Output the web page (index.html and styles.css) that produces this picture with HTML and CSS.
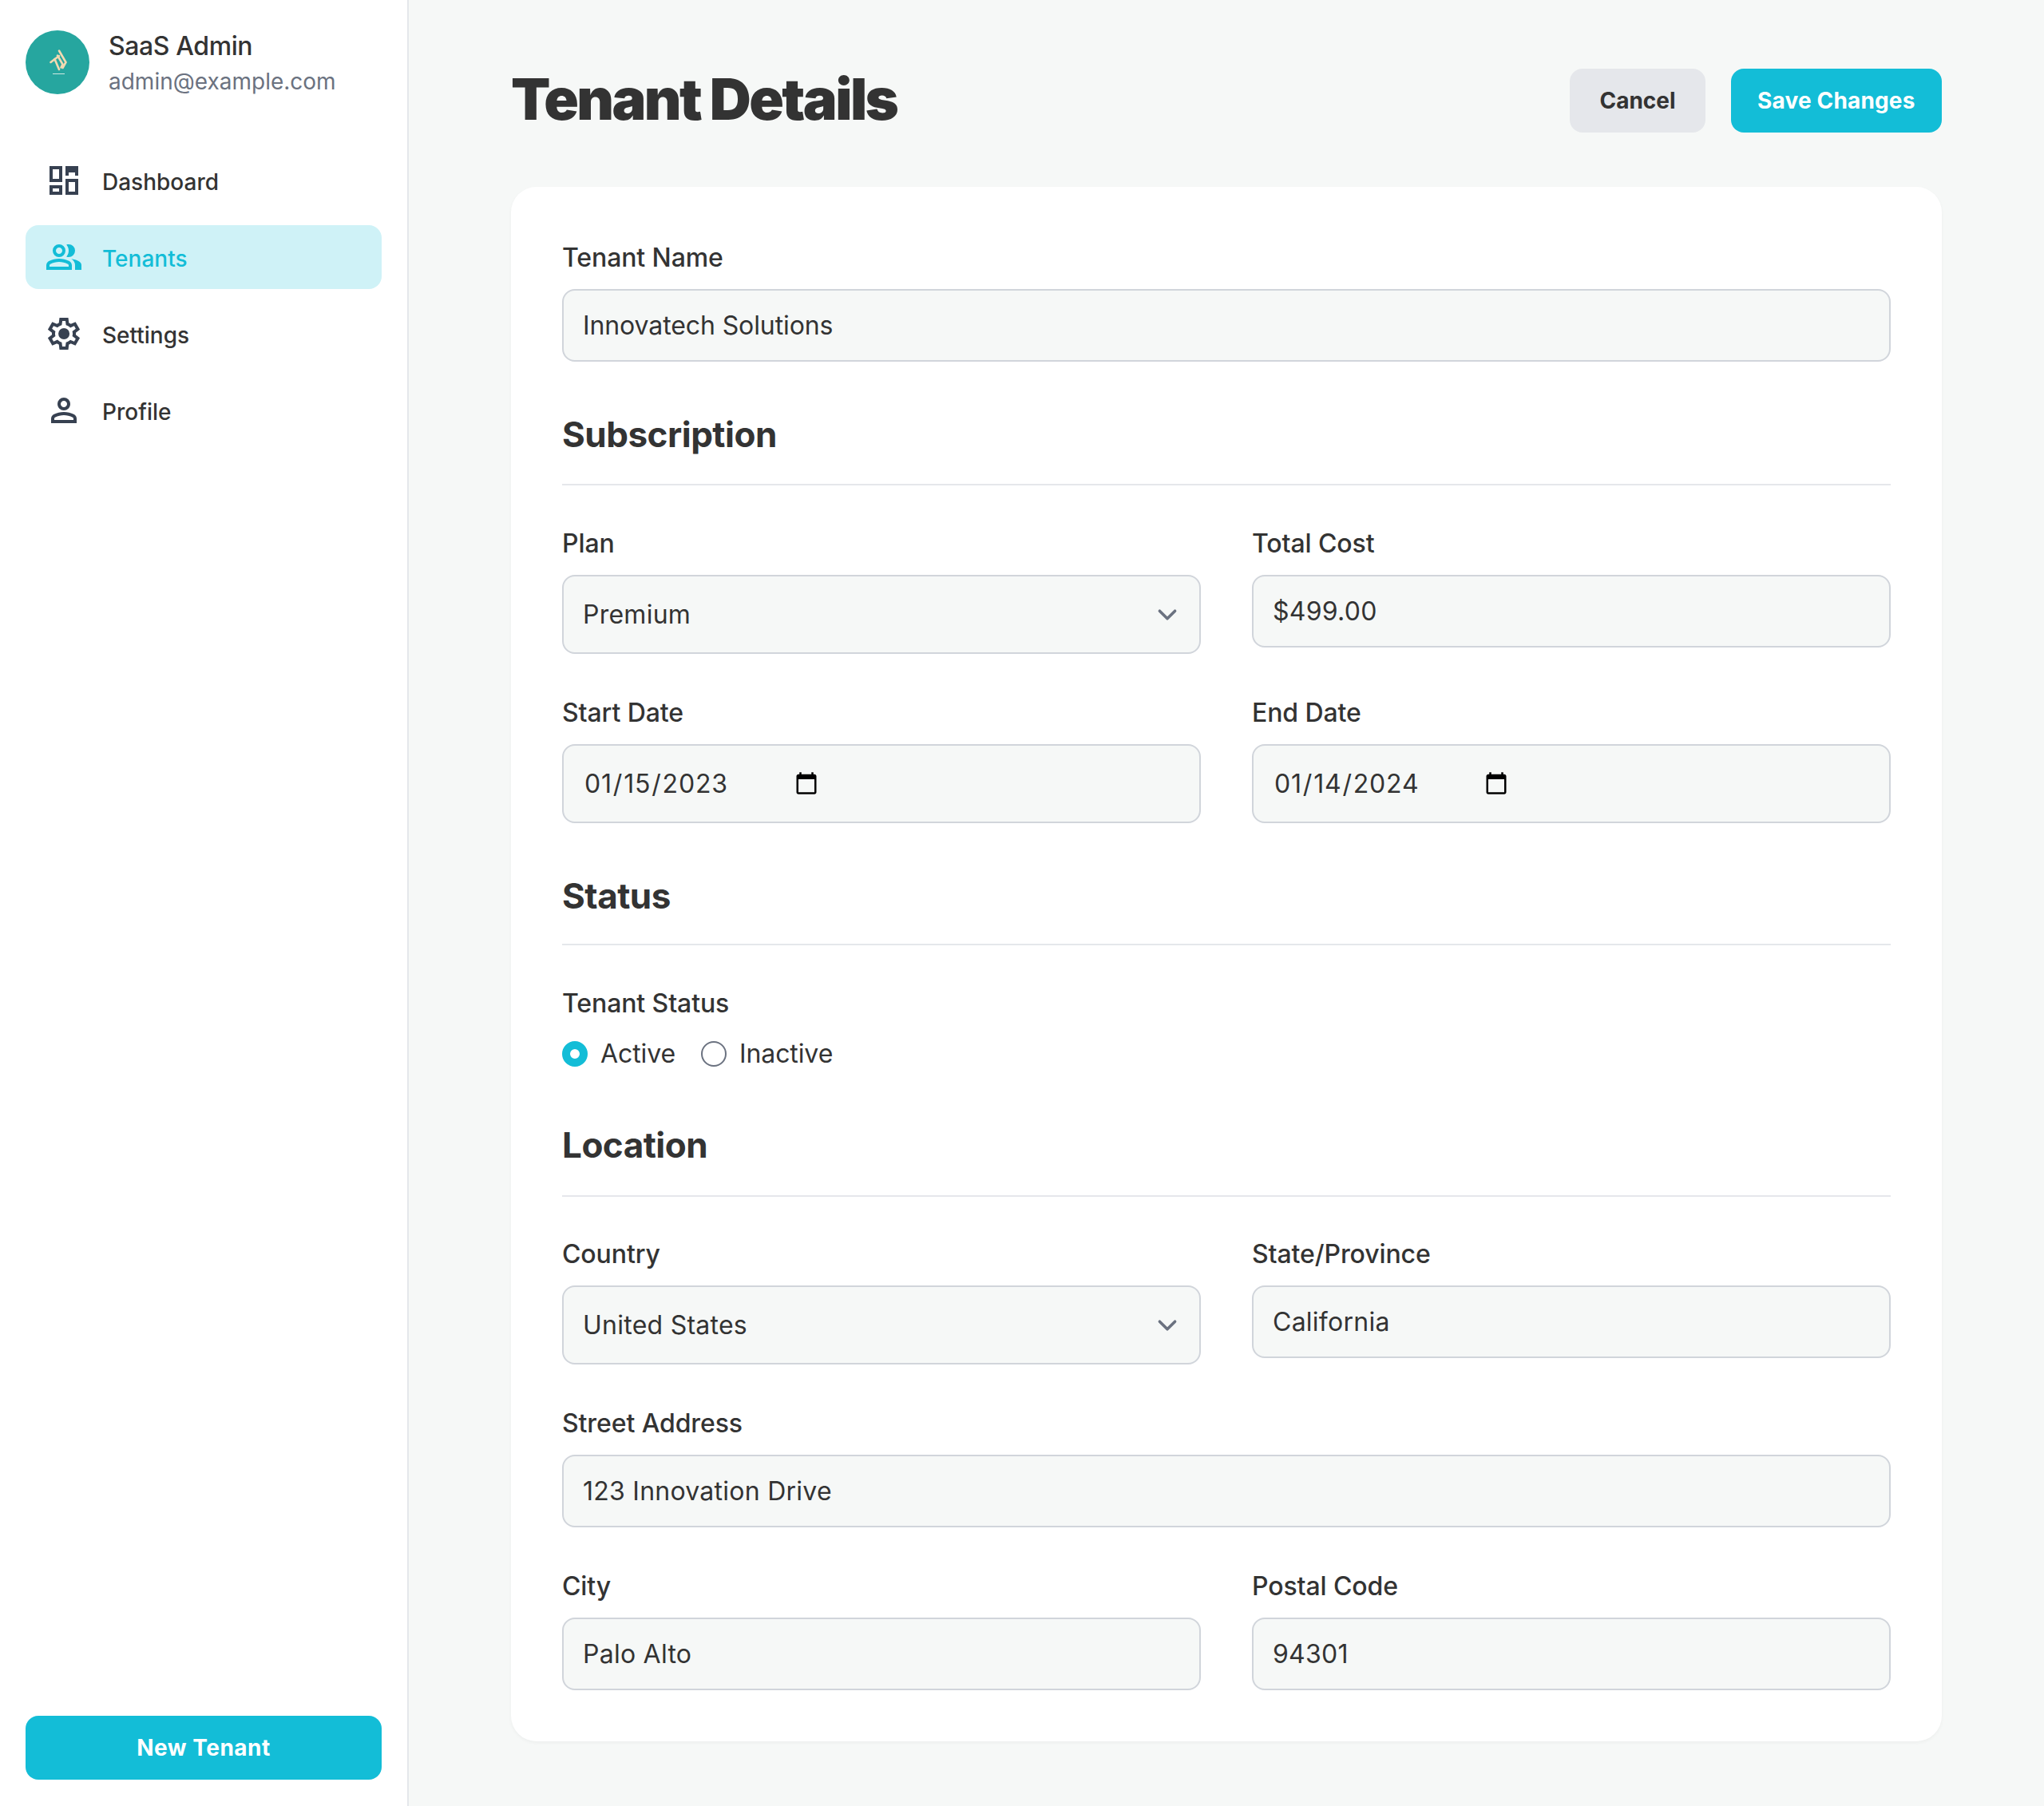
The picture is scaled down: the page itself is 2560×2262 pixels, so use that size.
FILE: index.html
```html
<!DOCTYPE html>
<html lang="en">

<head>
    <meta charset="UTF-8">
    <meta name="viewport" content="width=device-width, initial-scale=1.0">
    <title>Tenant Details</title>
    <link rel="stylesheet" href="styles.css">
</head>

<body>
    <div class="layout">
        <aside class="sidebar">
            <div class="account">
                <div class="avatar">
                    <svg viewBox="0 0 80 80" width="80" height="80" fill="none">
                        <g stroke="#f3d9b1" stroke-width="2.6" stroke-linecap="round">
                            <path d="M31.5 40L42 32" />
                            <path d="M36.5 36l5.5 13" />
                            <path d="M40 31.5l6.5 11-2 4" />
                            <path d="M42 25.5l8.5 14.5-4 7" />
                        </g>
                        <rect x="34" y="54" width="15" height="1" fill="#cfe9e2" />
                    </svg>
                </div>
                <div>
                    <div class="account-name">SaaS Admin</div>
                    <div class="account-email">admin@example.com</div>
                </div>
            </div>

            <nav class="nav">
                <a class="nav-item" href="#">
                    <svg class="nav-icon" viewBox="0 -960 960 960"><path d="M520-600v-240h320v240H520ZM120-440v-400h320v400H120Zm400 320v-400h320v400H520Zm-400 0v-240h320v240H120Zm80-400h160v-240H200v240Zm400 320h160v-240H600v240Zm0-400h160v-80H600v80ZM200-200h160v-80H200v80Z" /></svg>
                    <span>Dashboard</span>
                </a>
                <a class="nav-item active" href="#">
                    <svg class="nav-icon" viewBox="0 -960 960 960"><path d="M40-160v-112q0-34 17.5-62.5T104-378q62-31 126-46.5T360-440q66 0 130 15.5T616-378q29 15 46.5 43.5T680-272v112H40Zm720 0v-120q0-44-24.5-84.5T666-434q51 6 96 20.5t84 35.5q36 20 55 44.5t19 53.5v120H760ZM360-480q-66 0-113-47t-47-113q0-66 47-113t113-47q66 0 113 47t47 113q0 66-47 113t-113 47Zm400-160q0 66-47 113t-113 47q-11 0-28-2.5t-28-5.5q27-32 41.5-71t14.5-81q0-42-14.5-81T544-792q14-5 28-6.5t28-1.5q66 0 113 47t47 113ZM120-240h480v-32q0-11-5.5-20T580-306q-54-27-109-40.5T360-360q-56 0-111 13.5T140-306q-9 5-14.5 14t-5.5 20v32Zm240-320q33 0 56.5-23.5T440-640q0-33-23.5-56.5T360-720q-33 0-56.5 23.5T280-640q0 33 23.5 56.5T360-560Z" /></svg>
                    <span>Tenants</span>
                </a>
                <a class="nav-item" href="#">
                    <svg class="nav-icon" viewBox="0 -960 960 960"><path d="m370-80-16-128q-13-5-24.5-12T307-235l-119 50L78-375l103-78q-1-7-1-13.5v-27q0-6.5 1-13.5L78-585l110-190 119 50q11-8 23-15t24-12l16-128h220l16 128q13 5 24.5 12t22.5 15l119-50 110 190-103 78q1 7 1 13.5v27q0 6.5-2 13.5l103 78-110 190-118-50q-11 8-23 15t-24 12L590-80H370Zm70-80h79l14-106q31-8 57.5-23.5T639-327l99 41 39-68-86-65q5-14 7-29.5t2-31.5q0-16-2-31.5t-7-29.5l86-65-39-68-99 42q-22-23-48.5-38.5T533-694l-13-106h-79l-14 106q-31 8-57.5 23.5T321-633l-99-41-39 68 86 64q-5 15-7 30t-2 32q0 16 2 31t7 30l-86 65 39 68 99-42q22 23 48.5 38.5T427-266l13 106Zm42-180q58 0 99-41t41-99q0-58-41-99t-99-41q-59 0-99.5 41T342-480q0 58 40.5 99t99.5 41Zm-2-140Z" /></svg>
                    <span>Settings</span>
                </a>
                <a class="nav-item" href="#">
                    <svg class="nav-icon" viewBox="0 -960 960 960"><path d="M480-480q-66 0-113-47t-47-113q0-66 47-113t113-47q66 0 113 47t47 113q0 66-47 113t-113 47ZM160-160v-112q0-34 17.5-62.5T224-378q62-31 126-46.5T480-440q66 0 130 15.5T736-378q29 15 46.5 43.5T800-272v112H160Zm80-80h480v-32q0-11-5.5-20T700-306q-54-27-109-40.5T480-360q-56 0-111 13.5T260-306q-9 5-14.5 14t-5.5 20v32Zm240-320q33 0 56.5-23.5T560-640q0-33-23.5-56.5T480-720q-33 0-56.5 23.5T400-640q0 33 23.5 56.5T480-560Z" /></svg>
                    <span>Profile</span>
                </a>
            </nav>

            <button class="btn btn-primary new-tenant" type="button">New Tenant</button>
        </aside>

        <main class="main">
            <header class="page-header">
                <h1>Tenant Details</h1>
                <div class="actions">
                    <button class="btn btn-muted" type="button">Cancel</button>
                    <button class="btn btn-primary btn-save" type="button">Save Changes</button>
                </div>
            </header>

            <form class="card">
                <div class="field">
                    <label for="tenantName">Tenant Name</label>
                    <input id="tenantName" type="text" value="Innovatech Solutions">
                </div>

                <h2>Subscription</h2>
                <div class="grid">
                    <div class="field">
                        <label for="plan">Plan</label>
                        <select id="plan">
                            <option>Premium</option>
                        </select>
                    </div>
                    <div class="field">
                        <label for="totalCost">Total Cost</label>
                        <input id="totalCost" type="text" value="$499.00">
                    </div>
                    <div class="field">
                        <label for="startDate">Start Date</label>
                        <input id="startDate" type="date" value="2023-01-15">
                    </div>
                    <div class="field">
                        <label for="endDate">End Date</label>
                        <input id="endDate" type="date" value="2024-01-14">
                    </div>
                </div>

                <h2 class="status-title">Status</h2>
                <div class="field">
                    <label>Tenant Status</label>
                    <div class="radios">
                        <label class="radio"><span class="radio-mark on"></span>Active</label>
                        <label class="radio"><span class="radio-mark"></span>Inactive</label>
                    </div>
                </div>

                <h2 class="location-title">Location</h2>
                <div class="grid">
                    <div class="field">
                        <label for="country">Country</label>
                        <select id="country">
                            <option>United States</option>
                        </select>
                    </div>
                    <div class="field">
                        <label for="state">State/Province</label>
                        <input id="state" type="text" value="California">
                    </div>
                    <div class="field wide">
                        <label for="street">Street Address</label>
                        <input id="street" type="text" value="123 Innovation Drive">
                    </div>
                    <div class="field">
                        <label for="city">City</label>
                        <input id="city" type="text" value="Palo Alto">
                    </div>
                    <div class="field">
                        <label for="postal">Postal Code</label>
                        <input id="postal" type="text" value="94301">
                    </div>
                </div>
            </form>
        </main>
    </div>
</body>

</html>
```

FILE: styles.css
```css
* {
    box-sizing: border-box;
}

body {
    margin: 0;
    font-family: Inter, "Noto Sans", sans-serif;
    color: #333333;
    background-color: #f6f8f7;
}

.layout {
    display: flex;
    min-height: 2262px;
}

.sidebar {
    width: 512px;
    flex-shrink: 0;
    display: flex;
    flex-direction: column;
    padding: 34px 32px 33px;
    background-color: #fff;
    border-right: 2px solid #e5e7eb;
}

.account {
    display: flex;
    align-items: center;
    gap: 24px;
    margin-bottom: 64px;
}

.avatar {
    width: 80px;
    height: 80px;
    border-radius: 50%;
    background-color: #26a69f;
}

.avatar svg {
    display: block;
}

.account-name {
    font-size: 32px;
    line-height: 48px;
    font-weight: 500;
    letter-spacing: -0.4px;
}

.account-email {
    font-size: 28px;
    line-height: 40px;
    color: #6b7280;
}

.nav {
    display: flex;
    flex-direction: column;
    gap: 16px;
    flex: 1;
}

.nav-item {
    display: flex;
    align-items: center;
    gap: 24px;
    height: 80px;
    padding: 0 24px;
    border-radius: 16px;
    font-size: 28px;
    font-weight: 500;
    color: #333333;
    text-decoration: none;
}

.nav-item span {
    margin-top: 3px;
}

.nav-icon {
    width: 48px;
    height: 48px;
    fill: #374151;
}

.nav-item.active {
    background-color: #cff2f7;
    color: #13bdd7;
}

.nav-item.active .nav-icon {
    fill: #13bdd7;
}

.btn {
    height: 80px;
    padding: 0 32px;
    border: none;
    border-radius: 16px;
    font-family: inherit;
    font-size: 28px;
    font-weight: 700;
    cursor: pointer;
}

.btn-primary {
    background-color: #13bdd7;
    color: #fff;
}

.btn-muted {
    padding: 0 37px;
    background-color: #e5e7eb;
    color: #333333;
}

.btn-save {
    padding: 0 33.5px;
    letter-spacing: 0.15px;
}

.new-tenant {
    width: 100%;
    letter-spacing: 0.5px;
}

.main {
    flex: 1;
    padding: 86px 128px 81px;
}

.page-header {
    display: flex;
    justify-content: space-between;
    align-items: center;
    margin-bottom: 68px;
}

h1 {
    margin: 0 0 4px;
    font-size: 72px;
    line-height: 76px;
    font-weight: 900;
    letter-spacing: -2.6px;
}

.actions {
    display: flex;
    gap: 32px;
}

.card {
    padding: 64px;
    border-radius: 32px;
    background-color: #fff;
    box-shadow: 0 2px 4px rgba(0, 0, 0, 0.04);
}

.field label {
    display: block;
    margin-bottom: 14px;
    font-size: 32px;
    line-height: 50px;
    font-weight: 500;
    letter-spacing: -0.1px;
}

input,
select {
    display: block;
    width: 100%;
    height: 91px;
    padding: 0 24px;
    border: 2px solid #d1d5db;
    border-radius: 16px;
    background-color: #f6f8f7;
    font-family: inherit;
    font-size: 32px;
    color: #333333;
    letter-spacing: 0.25px;
}

#tenantName {
    letter-spacing: -0.1px;
}

select {
    height: 99px;
    appearance: none;
    background-image: url("data:image/svg+xml,%3csvg xmlns='http://www.w3.org/2000/svg' viewBox='0 0 20 20' fill='none'%3e%3cpath stroke='%236b7280' stroke-linecap='round' stroke-linejoin='round' stroke-width='1.5' d='M6 8l4 4 4-4'/%3e%3c/svg%3e");
    background-repeat: no-repeat;
    background-position: right 16px center;
    background-size: 48px 48px;
}

input[type="date"] {
    height: 99px;
    padding: 0 25px;
    display: flex;
    letter-spacing: 0.8px;
}

input[type="date"]::-webkit-datetime-edit {
    flex: 0 0 auto;
}

input[type="date"]::-webkit-calendar-picker-indicator {
    width: 32px;
    height: 32px;
    margin-left: 12px;
}

h2 {
    margin: 67px 0 48px;
    padding-bottom: 38px;
    border-bottom: 2px solid #e5e7eb;
    font-size: 44px;
    line-height: 48px;
    font-weight: 700;
    letter-spacing: -0.5px;
}

.status-title {
    padding-bottom: 36px;
}

.location-title {
    margin: 66px 0 47px;
    padding-bottom: 39px;
}

.grid {
    display: grid;
    grid-template-columns: 1fr 1fr;
    column-gap: 64px;
    row-gap: 49px;
    align-items: start;
}

.wide {
    grid-column: 1 / -1;
}

.radios {
    display: flex;
    gap: 32px;
}

.field .radio {
    display: flex;
    align-items: center;
    gap: 16px;
    margin: 0;
    font-size: 32px;
    line-height: 48px;
    font-weight: 400;
    letter-spacing: -0.1px;
}

.radio-mark {
    width: 32px;
    height: 32px;
    border: 2px solid #6b7280;
    border-radius: 50%;
}

.radio-mark.on {
    border: 10px solid #13bdd7;
    background-color: #fff;
}
```
